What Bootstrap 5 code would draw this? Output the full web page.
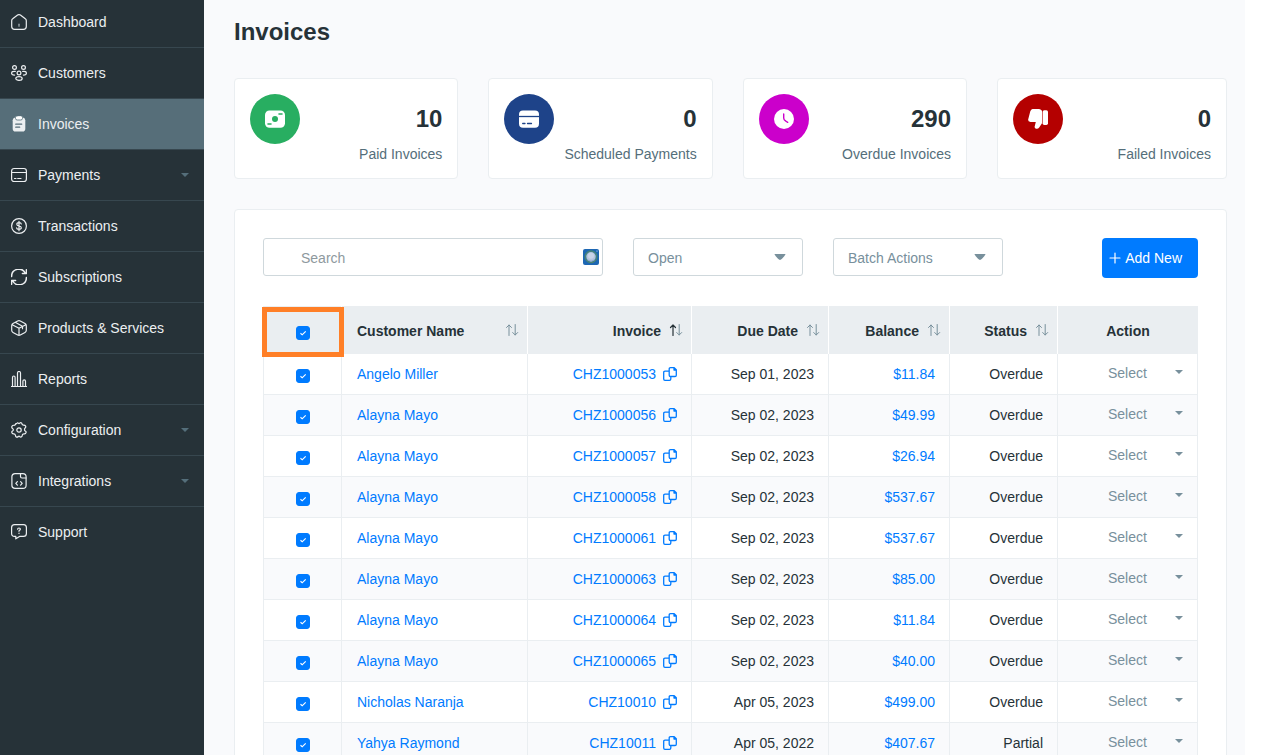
<!DOCTYPE html>
<html lang="en">
<head>
<meta charset="utf-8">
<meta name="viewport" content="width=device-width, initial-scale=1">
<title>Invoices</title>
<link href="https://cdn.jsdelivr.net/npm/bootstrap@5.3.0/dist/css/bootstrap.min.css" rel="stylesheet">
<style>
:root { --ink:#263238; --slate:#546e7a; --muted:#78909c; --line:#eaeef1; --blue:#007bff; --canvas:#f9fafc; }
body { font-family:"Liberation Sans", Arial, sans-serif; font-size:14px; line-height:20px; color:var(--ink); background:#fff; }
a { color:var(--blue); text-decoration:none; }
.ico { width:16px; height:16px; flex:none; fill:none; stroke:currentColor; stroke-width:1.2; stroke-linecap:round; stroke-linejoin:round; }

/* side menu */
.side-menu { width:204px; background:var(--ink); }
.side-menu .nav-link { display:flex; align-items:center; gap:11px; padding:15px 15px 15px 11px; color:#eceff1; border-bottom:1px solid #37474f; }
.side-menu li:first-child .nav-link { padding-top:12px; }
.side-menu li:last-child .nav-link { border-bottom:0; }
.side-menu .nav-link.active { background:#566e79; }
.tri { width:0; height:0; margin-left:auto; border:4px solid transparent; border-top-color:var(--slate); border-bottom:0; }

/* main area */
.canvas { background:var(--canvas); padding:17px 18px 0 30px; margin-right:19px; }
.page-title { font-size:24px; line-height:30px; font-weight:700; margin-bottom:31px; }
.stats { display:grid; grid-template-columns:1fr 1fr 1fr 1.025fr; gap:30px; margin-bottom:30px; }
.tile, .panel { background:#fff; border:1px solid var(--line); border-radius:4px; }
.tile { padding:15px 15px 14px; }
.disc { width:50px; height:50px; color:#fff; }
.disc svg { width:20px; height:20px; }
.figure-num { font-size:24px; line-height:50px; font-weight:700; }
.tile-label { color:var(--slate); }
.green { background:#28ae61; } .navy { background:#1e4389; } .magenta { background:#cb00cb; } .red { background:#b40000; }

.panel { padding:28px; }
.toolbar { gap:30px; margin-bottom:28px; }
.search-box { width:340px; }
.box { height:38px; border:1px solid #cfd8dc; border-radius:3px; font-size:14px; line-height:20px; }
.search-box .box { padding:9px 37px 7px; }
.search-box .box::placeholder { color:#8e999e; }
.addon { right:4px; top:11px; width:16px; height:16px; }
.pick { width:170px; padding:9px 14px 7px; color:var(--muted);
  background:#fff url("data:image/svg+xml,%3Csvg xmlns='http://www.w3.org/2000/svg' viewBox='0 0 12 6'%3E%3Cpath d='M.5 0h11Q11 2 8 4.800Q6 7 4 4.800Q1 2 .5 0z' fill='%2378909c'/%3E%3C/svg%3E") no-repeat right 16px top 15px / 12px 6px; }
.add-new { height:40px; padding:0 16px 0 7px; gap:4px; font-size:14px; background:var(--blue); color:#fff; border:0; border-radius:4px; }
.add-new .ico { width:12px; height:12px; }

/* invoice table */
.inv { table-layout:fixed; border-collapse:separate; border-spacing:0; width:100%; }
.inv th { height:48px; padding:2px 8px 0 15px; background:var(--line); border-right:1px solid #fff; font-weight:700; }
.inv th:last-child { border-right:0; text-align:center; padding-left:0; padding-right:0; }
.inv td { height:41px; padding:0 14px; text-align:right; border-right:1px solid var(--line); border-bottom:1px solid var(--line); }
.inv th:first-child, .inv td:first-child { border-left:1px solid var(--line); }
.inv td:nth-child(2) { text-align:left; padding-left:15px; }
.inv tbody tr:nth-child(even) td { background:var(--canvas); }
.inv th:first-child, .inv td:first-child { padding:4px 0 0; }
.inv th:first-child { padding-top:6px; }
.inv td:last-child { padding:0 0 2px; }
.sorter { display:flex; align-items:center; justify-content:flex-end; gap:8px; color:inherit; }
.sorter .ico { width:14px; height:14px; color:var(--muted); margin-bottom:3px; }
.sorter .up-on { color:var(--ink); }
.inv .form-check-input { display:block; width:14px; height:14px; margin:0 auto; border-radius:3px; float:none;
  background-size:12px 12px; }
.inv .form-check-input:checked { background-color:var(--blue); border-color:var(--blue);
  background-image:url("data:image/svg+xml,%3Csvg xmlns='http://www.w3.org/2000/svg' viewBox='0 0 12 12'%3E%3Cpath d='M3.500 6.300l1.700 1.500 3.500-3.500' fill='none' stroke='%23fff' stroke-width='1.200'/%3E%3C/svg%3E"); }
.inv td .ico { width:14px; height:14px; margin-left:7px; color:var(--blue); vertical-align:-2px; }
.row-action { appearance:none; display:block; width:100%; height:38px; padding:0 14px 0 50px; border:0; color:var(--muted); font-size:14px;
  background:url("data:image/svg+xml,%3Csvg xmlns='http://www.w3.org/2000/svg' viewBox='0 0 8 4'%3E%3Cpath d='M0 0h8L4 4z' fill='%2378909c'/%3E%3C/svg%3E") no-repeat right 14px top 16px / 8px 4px; }
.marker::after { content:""; position:absolute; inset:1px -3px -3px -2px; border:5px solid #ff7f27; z-index:1; pointer-events:none; }
</style>
</head>
<body>
<svg class="d-none" aria-hidden="true">
  <symbol id="copy" viewBox="0 0 14 14"><path d="M7.500.7h3.700l2.100 2.100v5.400q0 1.300-1.300 1.300H7.500q-1.300 0-1.300-1.300V2Q6.200.7 7.500.7zM11 .9V3h2.100M6 4.200H2Q.7 4.200.7 5.500V12q0 1.300 1.300 1.300h4.500q1.300 0 1.300-1.300V9.700" stroke-width="1.300"/></symbol>
  <symbol id="sort" viewBox="0 0 14 14"><path d="M4 12.500V2M1.500 4.500L4 2l2.500 2.500M10.200 1.500V12M7.700 9.500l2.500 2.500 2.500-2.500" stroke-width="1"/></symbol>
  <symbol id="sort-up" viewBox="0 0 14 14"><path d="M4 12.500V2M1.500 4.500L4 2l2.500 2.500" stroke-width="1.200"/><path stroke="#78909c" d="M10.200 1.500V12M7.700 9.500l2.500 2.500 2.500-2.500" stroke-width="1"/></symbol>
</svg>

<div class="d-flex vh-100 overflow-hidden">
  <nav class="side-menu flex-shrink-0" aria-label="Main menu">
    <ul class="nav flex-column flex-nowrap">
      <li><a class="nav-link" href="#"><svg class="ico" viewBox="0 0 16 16"><path d="M.7 6.700Q.7 5.500 1.700 4.800L6.600 1.100Q8 .1 9.400 1.100l4.900 3.700q1 .7 1 1.900v5.800q0 2.800-2.800 2.800h-9Q.7 15.300.7 12.500z"/><path d="M8 10.200v2" stroke="#aab4b9"/></svg>Dashboard</a></li>
      <li><a class="nav-link" href="#"><svg class="ico" viewBox="0 0 16 16"><circle cx="3.500" cy="2.500" r="1.900"/><circle cx="12.500" cy="2.500" r="1.900"/><circle cx="8" cy="8" r="1.900"/><ellipse cx="8" cy="13.500" rx="3.200" ry="1.900"/><path d="M4.300 6.400Q.6 6 .6 8.200q0 1.800 3 1.900M11.700 6.400q3.700-.4 3.700 1.800 0 1.800-3 1.900"/></svg>Customers</a></li>
      <li><a class="nav-link active" href="#" aria-current="page"><svg class="ico" viewBox="0 0 16 16"><path d="M4 1.500h8q2.300.5 2.300 2.800v8.400q0 2.800-2.800 2.800h-7q-2.800 0-2.800-2.800V4.300Q1.700 2 4 1.500z" fill="currentColor" stroke="none"/><rect x="4.500" y="-.3" width="7" height="4.300" rx="1.700" fill="#fff" stroke="#566e79" stroke-width=".8"/><path d="M4.700 8.200h6M4.700 11.200h4" stroke="#566e79"/></svg>Invoices</a></li>
      <li><a class="nav-link" href="#"><svg class="ico" viewBox="0 0 16 16"><rect x=".6" y="1.500" width="14.800" height="13" rx="2.500"/><path d="M.6 5.500h14.800M3.500 11.500h1.500M6.700 11.500h3.300"/></svg>Payments<span class="tri"></span></a></li>
      <li><a class="nav-link" href="#"><svg class="ico" viewBox="0 0 16 16"><circle cx="8" cy="8" r="7.400"/><path d="M10.300 6Q10.100 4.700 8 4.700 5.800 4.700 5.800 6.300 5.800 7.800 8 8q2.300.3 2.300 1.800Q10.300 11.300 8 11.300 5.700 11.300 5.600 9.900M8 3.300v9.400"/></svg>Transactions</a></li>
      <li><a class="nav-link" href="#"><svg class="ico" viewBox="0 0 16 16"><path d="M.6 7.500A7.200 7.200 0 0 1 14.300 4.300M15.400 8.500A7.200 7.200 0 0 1 1.700 11.700M15.400.8v3.800h-4M.6 15.200v-3.800h4" stroke-width="1.500"/></svg>Subscriptions</a></li>
      <li><a class="nav-link" href="#"><svg class="ico" viewBox="0 0 16 16"><path d="M6.700 1Q8 .3 9.300 1l4.700 2.500q1.300.7 1.300 2.200v4.600q0 1.500-1.300 2.200L9.300 15Q8 15.700 6.700 15L2 12.500Q.7 11.800.7 10.300V5.700Q.7 4.200 2 3.500zM1.200 4.700L8 8.200l6.800-3.500M8 8.200v7M4.600 2.500l6.900 3.700v2.500"/></svg>Products &amp; Services</a></li>
      <li><a class="nav-link" href="#"><svg class="ico" viewBox="0 0 16 16"><path d="M.3 15.500h15.400"/><path d="M1.500 15.500V6.500q0-1.500 1.300-1.500t1.300 1.500v9M6.500 15.500V2Q6.500.5 8 .5T9.500 2v13.500M11.900 15.500v-5.200q0-1.500 1.300-1.500t1.300 1.500v5.200"/></svg>Reports</a></li>
      <li><a class="nav-link" href="#"><svg class="ico" viewBox="0 0 16 16"><circle cx="8" cy="8" r="2.200"/><path d="M5.800 1.600Q6.500.2 7.200 1.100 8 1.900 8.800 1.100q.9-.9 1.900.1.300 1.900 1.500 1.900 1.700-.3 2.400.9.500 1.300-.5 2Q13.100 7.200 13.800 8.700q1.400.5 1.400 1.500-.5 1.900-2 1.700-1.900-.1-1.900 1.400 0 1.500-1.400 1.900-.9 0-1.200-.7-.7-.6-1.400 0-.9 1.100-2.200.4-.7-.7-.6-1.600-.4-1.500-1.900-1.400-1.600 0-1.900-1.700 0-1 1.200-1.500.9-1 0-1.900Q.4 6 .9 4.300q.9-1.300 2.200-1 1.600-.2 1.700-1.700z"/></svg>Configuration<span class="tri"></span></a></li>
      <li><a class="nav-link" href="#"><svg class="ico" viewBox="0 0 16 16"><rect x=".9" y=".6" width="14.200" height="14.800" rx="3.200"/><path d="M9.500.8v2.700q0 1.500 1.500 1.500h4M6.400 8.700l-1.600 1.700 1.600 1.700M9.600 8.700l1.600 1.700-1.600 1.700"/></svg>Integrations<span class="tri"></span></a></li>
      <li><a class="nav-link" href="#"><svg class="ico" viewBox="0 0 16 16"><path d="M3.500.7h9q2.900 0 2.900 2.900v5.900q0 2.900-2.900 2.900H8.500L4.800 14.800v-2.400H3.500Q.6 12.400.6 9.500V3.600Q.6.7 3.500.7z"/><path d="M6.600 5.200Q6.700 4 8 4t1.400 1.100Q9.400 6 8 6.800v.5M8 9.200v.2"/></svg>Support</a></li>
    </ul>
  </nav>

  <main class="canvas flex-grow-1">
    <h1 class="page-title">Invoices</h1>

    <section class="stats" aria-label="Summary">
      <div class="tile d-flex justify-content-between">
        <span class="disc green rounded-circle d-flex align-items-center justify-content-center flex-shrink-0"><svg viewBox="0 0 20 20"><rect y="1.500" width="20" height="17.300" rx="4.500" fill="#fff"/><circle cx="10" cy="10" r="3" fill="#28ae61"/><path d="M14 5h3M3 15h3" stroke="#28ae61" stroke-width="1.600" stroke-linecap="round"/></svg></span>
        <div class="text-end"><div class="figure-num">10</div><div class="tile-label">Paid Invoices</div></div>
      </div>
      <div class="tile d-flex justify-content-between">
        <span class="disc navy rounded-circle d-flex align-items-center justify-content-center flex-shrink-0"><svg viewBox="0 0 20 20"><rect y="1.500" width="20" height="17.300" rx="4" fill="#fff"/><path d="M0 7.500h20" stroke="#1e4389" stroke-width="1.300"/><path d="M3.700 14.500h2.300M8.500 14.500h4" stroke="#1e4389" stroke-width="1.300" stroke-linecap="round"/></svg></span>
        <div class="text-end"><div class="figure-num">0</div><div class="tile-label">Scheduled Payments</div></div>
      </div>
      <div class="tile d-flex justify-content-between">
        <span class="disc magenta rounded-circle d-flex align-items-center justify-content-center flex-shrink-0"><svg viewBox="0 0 20 20"><circle cx="10" cy="10" r="10" fill="#fff"/><path d="M9.700 5v4q0 2 2 3l2 1.300" fill="none" stroke="#cb00cb" stroke-width="1.400" stroke-linecap="round"/></svg></span>
        <div class="text-end"><div class="figure-num">290</div><div class="tile-label">Overdue Invoices</div></div>
      </div>
      <div class="tile d-flex justify-content-between">
        <span class="disc red rounded-circle d-flex align-items-center justify-content-center flex-shrink-0"><svg viewBox="0 0 20 20"><path d="M4.500 0H11q1.500 0 3 1.700v12.500l-2.800 4.300q-1.600 2-3.700.9-1.300-.8-.7-2.400l1-4H2.500Q0 13 .1 10.700L2.300 2.200Q3 .2 4.500 0z" fill="#fff"/><rect x="14.600" y="1.300" width="5.400" height="14.700" rx="1.700" fill="#fff"/></svg></span>
        <div class="text-end"><div class="figure-num">0</div><div class="tile-label">Failed Invoices</div></div>
      </div>
    </section>

    <section class="panel">
      <div class="toolbar d-flex align-items-start">
        <div class="search-box position-relative">
          <input class="form-control box" type="search" placeholder="Search" aria-label="Search invoices">
          <svg class="addon position-absolute" viewBox="0 0 16 16"><rect width="16" height="16" rx="2" fill="#1d67b3"/><circle cx="8" cy="7.800" r="6" fill="#3e7f8c" stroke="#568b62" stroke-width=".8"/><circle cx="8" cy="7.700" r="4.700" fill="#b4c3de"/><circle cx="8" cy="6.800" r="3" fill="#c9d4e7"/><path d="M4.500 11q3.500 2.500 7 0" fill="none" stroke="#8ea6c9"/><circle cx="14" cy="2" r=".6" fill="#dcecff"/></svg>
        </div>
        <select class="box pick form-select" aria-label="Invoice state"><option>Open</option></select>
        <select class="box pick form-select" aria-label="Batch actions"><option>Batch Actions</option></select>
        <button class="btn add-new d-flex align-items-center ms-auto" type="button"><svg class="ico" viewBox="0 0 12 12"><path d="M6 1v10M1 6h10"/></svg>Add New</button>
      </div>

      <table class="inv">
        <colgroup><col style="width:79px"><col style="width:186px"><col style="width:164px"><col style="width:137px"><col style="width:121px"><col style="width:108px"><col style="width:140px"></colgroup>
        <thead>
          <tr>
            <th class="marker position-relative"><input class="form-check-input" type="checkbox" checked aria-label="Select all invoices"></th>
            <th><a class="sorter justify-content-between" href="#">Customer Name<svg class="ico"><use href="#sort"/></svg></a></th>
            <th><a class="sorter" href="#">Invoice<svg class="ico up-on"><use href="#sort-up"/></svg></a></th>
            <th><a class="sorter" href="#">Due Date<svg class="ico"><use href="#sort"/></svg></a></th>
            <th><a class="sorter" href="#">Balance<svg class="ico"><use href="#sort"/></svg></a></th>
            <th><a class="sorter" href="#">Status<svg class="ico"><use href="#sort"/></svg></a></th>
            <th>Action</th>
          </tr>
        </thead>
        <tbody>
          <tr><td><input class="form-check-input" type="checkbox" checked aria-label="Select CHZ1000053"></td><td><a href="#">Angelo Miller</a></td><td><a href="#">CHZ1000053</a><svg class="ico"><use href="#copy"/></svg></td><td>Sep 01, 2023</td><td><a href="#">$11.84</a></td><td>Overdue</td><td><select class="row-action" aria-label="Action for CHZ1000053"><option>Select</option></select></td></tr>
          <tr><td><input class="form-check-input" type="checkbox" checked aria-label="Select CHZ1000056"></td><td><a href="#">Alayna Mayo</a></td><td><a href="#">CHZ1000056</a><svg class="ico"><use href="#copy"/></svg></td><td>Sep 02, 2023</td><td><a href="#">$49.99</a></td><td>Overdue</td><td><select class="row-action" aria-label="Action for CHZ1000056"><option>Select</option></select></td></tr>
          <tr><td><input class="form-check-input" type="checkbox" checked aria-label="Select CHZ1000057"></td><td><a href="#">Alayna Mayo</a></td><td><a href="#">CHZ1000057</a><svg class="ico"><use href="#copy"/></svg></td><td>Sep 02, 2023</td><td><a href="#">$26.94</a></td><td>Overdue</td><td><select class="row-action" aria-label="Action for CHZ1000057"><option>Select</option></select></td></tr>
          <tr><td><input class="form-check-input" type="checkbox" checked aria-label="Select CHZ1000058"></td><td><a href="#">Alayna Mayo</a></td><td><a href="#">CHZ1000058</a><svg class="ico"><use href="#copy"/></svg></td><td>Sep 02, 2023</td><td><a href="#">$537.67</a></td><td>Overdue</td><td><select class="row-action" aria-label="Action for CHZ1000058"><option>Select</option></select></td></tr>
          <tr><td><input class="form-check-input" type="checkbox" checked aria-label="Select CHZ1000061"></td><td><a href="#">Alayna Mayo</a></td><td><a href="#">CHZ1000061</a><svg class="ico"><use href="#copy"/></svg></td><td>Sep 02, 2023</td><td><a href="#">$537.67</a></td><td>Overdue</td><td><select class="row-action" aria-label="Action for CHZ1000061"><option>Select</option></select></td></tr>
          <tr><td><input class="form-check-input" type="checkbox" checked aria-label="Select CHZ1000063"></td><td><a href="#">Alayna Mayo</a></td><td><a href="#">CHZ1000063</a><svg class="ico"><use href="#copy"/></svg></td><td>Sep 02, 2023</td><td><a href="#">$85.00</a></td><td>Overdue</td><td><select class="row-action" aria-label="Action for CHZ1000063"><option>Select</option></select></td></tr>
          <tr><td><input class="form-check-input" type="checkbox" checked aria-label="Select CHZ1000064"></td><td><a href="#">Alayna Mayo</a></td><td><a href="#">CHZ1000064</a><svg class="ico"><use href="#copy"/></svg></td><td>Sep 02, 2023</td><td><a href="#">$11.84</a></td><td>Overdue</td><td><select class="row-action" aria-label="Action for CHZ1000064"><option>Select</option></select></td></tr>
          <tr><td><input class="form-check-input" type="checkbox" checked aria-label="Select CHZ1000065"></td><td><a href="#">Alayna Mayo</a></td><td><a href="#">CHZ1000065</a><svg class="ico"><use href="#copy"/></svg></td><td>Sep 02, 2023</td><td><a href="#">$40.00</a></td><td>Overdue</td><td><select class="row-action" aria-label="Action for CHZ1000065"><option>Select</option></select></td></tr>
          <tr><td><input class="form-check-input" type="checkbox" checked aria-label="Select CHZ10010"></td><td><a href="#">Nicholas Naranja</a></td><td><a href="#">CHZ10010</a><svg class="ico"><use href="#copy"/></svg></td><td>Apr 05, 2023</td><td><a href="#">$499.00</a></td><td>Overdue</td><td><select class="row-action" aria-label="Action for CHZ10010"><option>Select</option></select></td></tr>
          <tr><td><input class="form-check-input" type="checkbox" checked aria-label="Select CHZ10011"></td><td><a href="#">Yahya Raymond</a></td><td><a href="#">CHZ10011</a><svg class="ico"><use href="#copy"/></svg></td><td>Apr 05, 2022</td><td><a href="#">$407.67</a></td><td>Partial</td><td><select class="row-action" aria-label="Action for CHZ10011"><option>Select</option></select></td></tr>
        </tbody>
      </table>
    </section>
  </main>
</div>
<script src="https://cdn.jsdelivr.net/npm/bootstrap@5.3.0/dist/js/bootstrap.bundle.min.js"></script>
</body>
</html>
